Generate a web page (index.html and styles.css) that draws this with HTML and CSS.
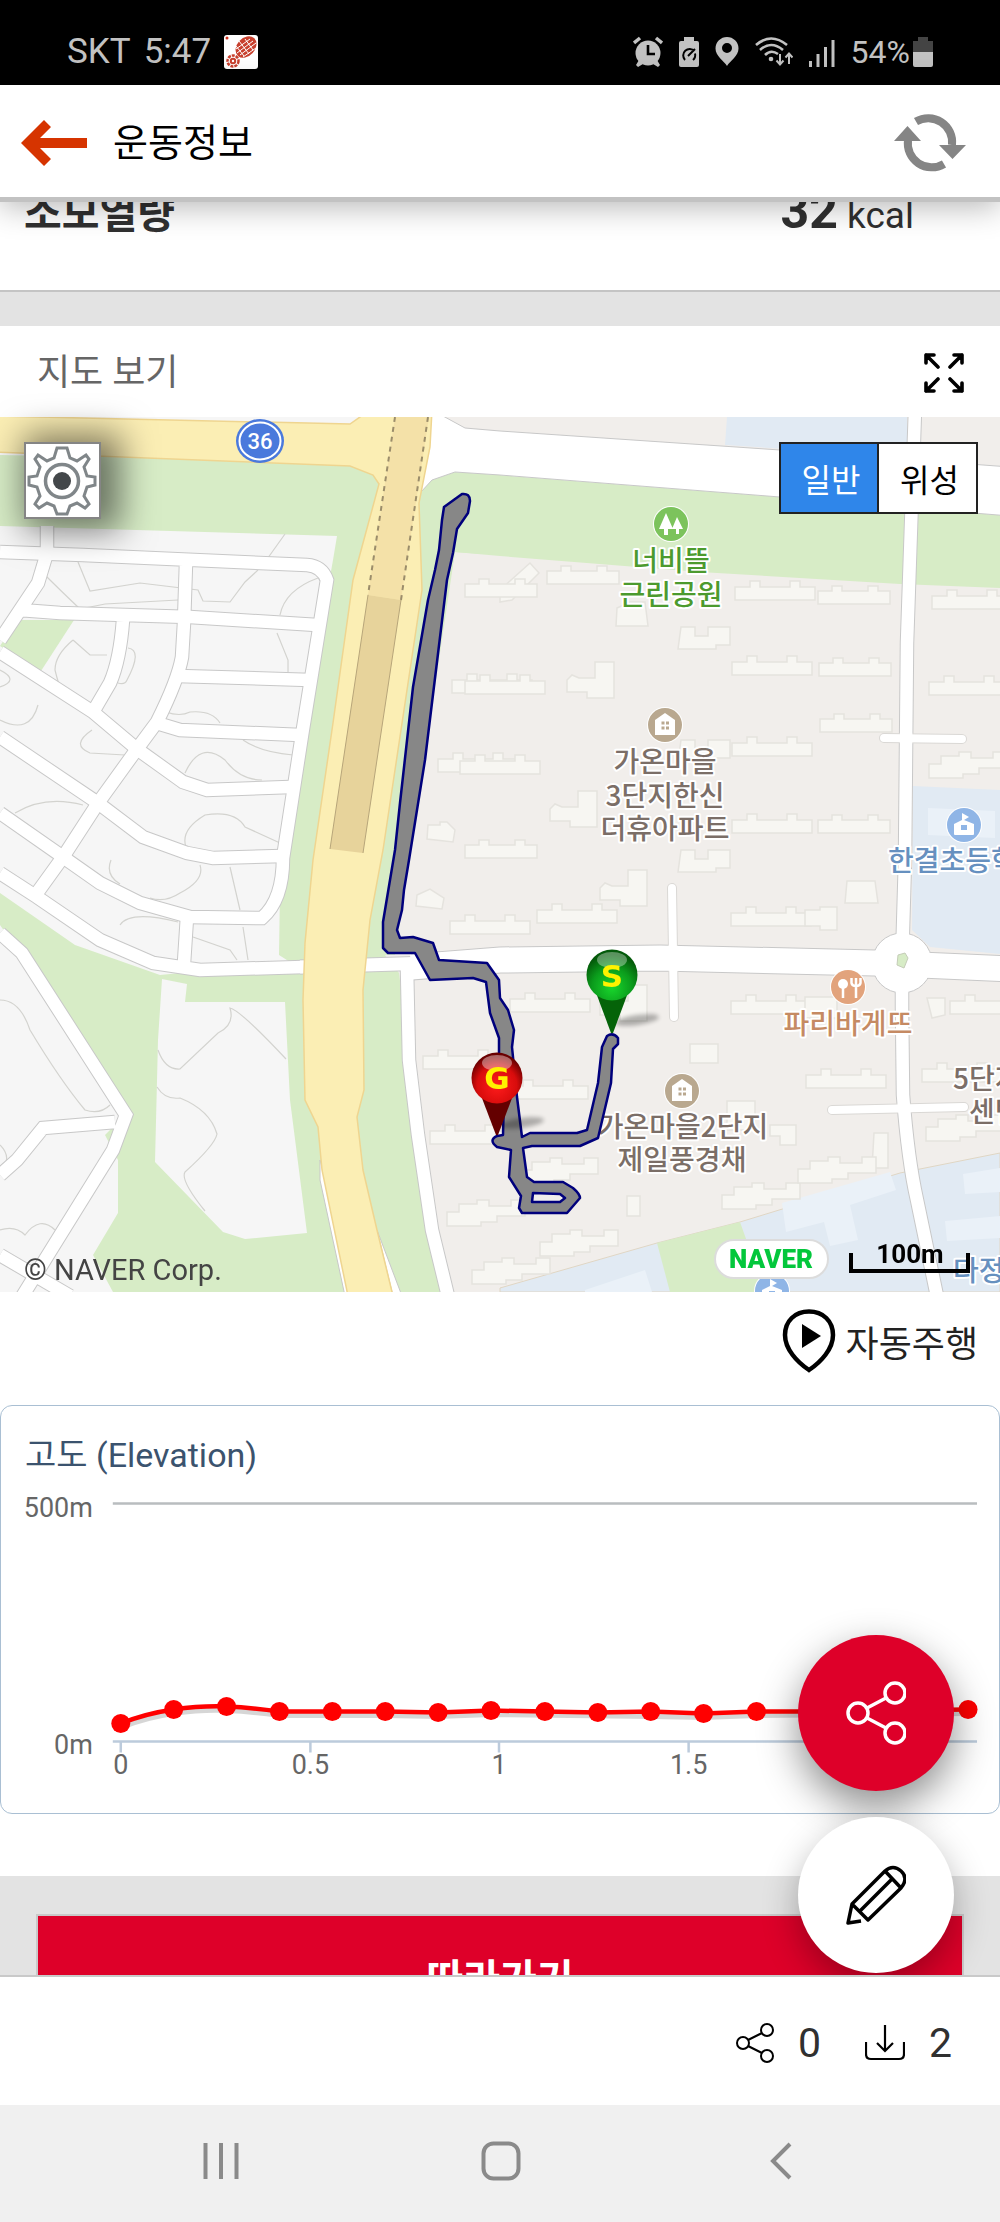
FILE: index.html
```html
<!DOCTYPE html>
<html lang="ko">
<head>
<meta charset="utf-8">
<meta name="viewport" content="width=device-width, initial-scale=1">
<title>운동정보</title>
<link rel="stylesheet" href="styles.css">
</head>
<body>
<div class="app">
  <div class="status">
    <div class="status-left">
      <span>SKT</span><span>5:47</span>
      <svg class="app-badge" width="34" height="34" viewBox="0 0 34 34">
        <rect width="34" height="34" rx="3" fill="#fff"/>
        <circle cx="3" cy="3" r="1.5" fill="#d0301c"/>
        <ellipse cx="22" cy="12" rx="9" ry="12" transform="rotate(42 22 12)" fill="#c8402e"/>
        <path d="M12 14l14-10M13 18l16-12M16 20l16-12M19 22l13-9M15 6l10 13M21 4l8 11M12 11l8 10" stroke="#fff" stroke-width="1"/>
        <circle cx="9" cy="26" r="5.5" fill="none" stroke="#c8402e" stroke-width="2.5" stroke-dasharray="3 1"/>
        <circle cx="9" cy="26" r="2.2" fill="none" stroke="#c8402e" stroke-width="2"/>
      </svg>
    </div>
    <div class="status-right">
      <svg width="30" height="32" viewBox="0 0 30 32"><g fill="#c2c2c2"><circle cx="15" cy="17" r="12.5"/><path d="M6 24l4 4-5 3-2-2zM24 24l-4 4 5 3 2-2z"/></g><path d="M1 7l6-5M29 7l-6-5" stroke="#c2c2c2" stroke-width="3.5"/><path d="M15 9v9h7" fill="none" stroke="#000" stroke-width="2.6"/></svg>
      <svg width="20" height="32" viewBox="0 0 20 32"><path d="M5 1h10v4h3q2 0 2 2v22q0 2-2 2H2q-2 0-2-2V7q0-2 2-2h3z" fill="#c2c2c2"/><path d="M6 24a6.500 6.500 0 1 1 9.500-9M16 17.500a6.500 6.500 0 0 1-2 6.500M9 20l7-7" fill="none" stroke="#000" stroke-width="2"/></svg>
      <svg width="24" height="32" viewBox="0 0 24 32"><path fill-rule="evenodd" d="M12 1a11.500 11.500 0 0 1 11.500 11.500C23.500 20 15 25 12 30 9 25 .5 20 .5 12.500A11.500 11.500 0 0 1 12 1zm0 6a5 5 0 1 0 0 10 5 5 0 0 0 0-10z" fill="#c2c2c2"/></svg>
      <svg width="38" height="32" viewBox="0 0 38 32"><g fill="none" stroke="#c2c2c2" stroke-width="2.600"><path d="M1 9Q16-4 32 9M5 14Q16 4 28 14M10 19Q16 13 23 18"/><path d="M25 18v10M21.500 24.500l3.500 4 3.500-4M34 28V18M30.500 21.500l3.500-4 3.500 4" stroke-width="2"/></g><circle cx="16" cy="23" r="2.300" fill="#c2c2c2"/></svg>
      <svg width="26" height="32" viewBox="0 0 26 32"><path d="M1.500 25v6M9 18v13M16.500 11v20M24 4v27" stroke="#c2c2c2" stroke-width="3"/></svg>
      <span class="battery">54%<svg width="20" height="32" viewBox="0 0 20 32"><path d="M5 1h10v4h5v12H0V5h5z" fill="#444"/><path d="M0 16h20v13q0 2-2 2H2q-2 0-2-2z" fill="#c2c2c2"/></svg></span>
    </div>
  </div>

  <header class="bar">
    <button class="plain" aria-label="뒤로"><svg width="66" height="46" viewBox="0 0 66 46"><path d="M0 23L23 0l7 7-11 11h47v10H19l11 11-7 7z" fill="#d63400"/></svg></button>
    <h1>운동정보</h1>
    <button class="plain" aria-label="새로고침"><svg width="72" height="58" viewBox="0 0 72 58"><g fill="none" stroke="#858585" stroke-width="8"><path d="M22 7.500A24 24 0 0 1 58 31"/><path d="M50 50A24 24 0 0 1 14 26"/></g><path d="M45 31h27L58.500 45zM0 27h27L13.500 12z" fill="#858585"/></svg></button>
  </header>

  <main>
    <section class="metric">
      <span class="metric-name">소모열량</span>
      <span class="metric-value"><b>32</b> kcal</span>
    </section>

    <section class="map-head">
      <h2>지도 보기</h2>
      <button class="plain" aria-label="전체 화면"><svg width="40" height="40" viewBox="0 0 40 40" fill="none" stroke="#000" stroke-width="3.600" stroke-linecap="round" stroke-linejoin="round"><path d="M2 10V2h8M2 2l12 12M30 2h8v8M38 2L26 14M2 30v8h8M2 38l12-12M38 30v8h-8M38 38L26 26"/></svg></button>
    </section>

    <section class="map">
      <svg class="map-art" viewBox="0 417 1000 875" role="img" aria-label="운동 경로 지도">
        <defs>
          <path id="slab" d="M0 6H15V0H25V6H55V0H65V6H80V19H0Z"/>
          <path id="slab-s" d="M0 5H14V0H24V5H50V0H60V5H72V18H0Z"/>
          <path id="ell" d="M0 18L5 13 12 16H28V0H47V36H20V30H0Z"/>
          <path id="block" d="M3 0H17V9H30V0H52V18H38V22H0Z"/>
          <path id="steps" d="M0 12H12V4H30V0H42V6H64V0H78V16H50V22H34V26H0Z"/>
          <g id="house"><circle r="18" fill="#fff"/><circle r="17" fill="#b9a88f"/><path d="M-10 10V-5L0-12 10-5V10Z" fill="#fff"/><path d="M-3.500-2h3M1-2h3M-3.500 3h3M1 3h3" stroke="#b9a88f" stroke-width="3"/></g>
          <g id="school"><circle r="18" fill="#fff"/><circle r="17" fill="#8fb5e6"/><path d="M-9 10Q-10 10-10 9V-1L-2-5V-12L5-8 0-5 10-1V9Q10 10 9 10Z" fill="#fff"/><path d="M-3 0h6v5h-6z" fill="#8fb5e6"/></g>
          <g id="lanes">
            <path d="M0 552L83 555 307 565Q322 566 327 580L302 735 283 858Q283 900 262 918L190 917 140 903 100 883 63 857 98 803 137 749 157 722Q178 680 182 657L184 623 186 563"/>
            <path d="M0 652L93 712 137 749 183 782 207 790 290 787M0 737L98 803 143 837 187 853 213 858 282 856M0 813L63 857 37 893M0 873L37 897 100 940 153 963 200 970 303 967M187 917L184 963"/>
            <path d="M47 526V553L38 583 20 610 0 640M20 610L60 613 190 617 317 625M123 620Q120 660 110 683L93 712M178 676L310 680M160 724L180 730 300 735"/>
            <path d="M0 933L22 953 126 1115 113 1150 20 1300M115 1122L43 1128 17 1160 0 1175M0 1255L70 1296"/>
            <path d="M407 968L409 1060 418 1135 432 1230 448 1296"/>
            <path d="M915 410L907 643 905 860 902 962 902 1008 903 1095Q908 1160 917 1200L937 1296"/>
          </g>
        </defs>

        <rect y="417" width="1000" height="875" fill="#f6f6f6"/>
        <path d="M0 455L380 462 430 480 500 474 400 973 440 1292H113L93 1255 118 1213V1160L105 1135 130 1110 0 925V893L75 945 160 975 290 962 279 955 280 890 302 735 333 560 337 536 0 526Z" fill="#d7ecc6"/>
        <path d="M162 979L158 1040 155 1162 223 1232 245 1239 307 1233 290 1100 285 1002H185L187 984 162 979Z" fill="#f6f6f6"/>
        <path d="M17 620H74L41 671 0 646Z" fill="#d7ecc6"/>
        <g fill="none" stroke="#d3d3cf" stroke-width="1.200">
          <path d="M285 534L265 562M78 562L90 591 140 583 198 590 203 601 230 602 245 582 258 570M280 615Q285 590 318 578M277 633L288 660V672M166 712Q180 717 190 712 212 710 220 723M45 575Q60 590 80 609L105 604 178 600M73 640Q55 655 55 670 60 690 60 684M73 640L90 655H107M128 648Q143 650 127 680 125 685 118 683M0 670Q20 680 0 687M0 720Q30 735 38 705M92 730Q70 745 90 753L125 755M185 773Q200 740 225 760 240 780 262 780M243 740Q260 752 293 755M186 847Q180 830 205 815 235 810 245 827L280 843M15 813Q45 795 83 805M111 860Q105 875 120 884M200 865Q205 880 180 893 165 903 150 898M230 867L240 910M120 925Q130 910 178 922M243 927L248 960M193 937L230 950 237 960M0 1000Q20 1000 30 1030 60 1080 85 1110 100 1115 110 1105M0 1145Q10 1155 5 1165M0 1230Q15 1225 25 1235 40 1215 55 1230M158 1050Q165 1070 180 1069L218 1033Q235 1025 230 1008 240 1010 286 1059M157 1087Q165 1100 180 1098 210 1110 217 1134 215 1145 185 1172 180 1180 205 1211"/>
        </g>

        <path d="M455 552L700 570 1000 586V1292H440L399 973 385 955Z" fill="#f1eeeb"/>
        <path d="M440 417H1000V466L780 450 465 430Z" fill="#f1eeeb"/>
        <path d="M727 417H907V457L725 445Z" fill="#e1eaf3"/>
        <path d="M913 786L1000 790V954L930 947 912 930Z" fill="#e1eaf3"/>
        <path d="M500 1288L657 1243 740 1222 900 1173 1000 1153V1292H500Z" fill="#e1eaf3" stroke="#e0d6c4"/>
        <path d="M657 1243L740 1222 765 1292H670Z" fill="#d7ecc6"/>
        <g fill="#eaf1f8"><path d="M782 1203L890 1172 896 1190 850 1205 858 1240 830 1246 824 1222 786 1232ZM963 1174L1000 1168V1192L965 1194ZM945 1221L1000 1216V1238L947 1241ZM585 1290L645 1270 652 1292H585Z"/><path d="M928 808L995 811V838L928 835Z"/></g>

        <g fill="#f7f6f2" stroke="#e5e3de" stroke-width="1.500">
          <use href="#slab" x="735" y="581"/><use href="#slab-s" x="818" y="586"/><use href="#slab" x="732" y="656"/><use href="#slab-s" x="819" y="658"/><use href="#slab-s" x="820" y="714"/><use href="#slab" x="732" y="737"/><use href="#slab" x="732" y="814"/><use href="#slab-s" x="818" y="815"/>
          <use href="#slab" x="932" y="590"/><use href="#slab" x="929" y="676"/><use href="#steps" x="929" y="752"/><use href="#slab-s" x="547" y="566"/><path d="M500 590L530 563 539 573 512 600 500 602ZM617 608L630 602H645L648 626H616Z"/>
          <use href="#ell" x="567" y="662"/><use href="#ell" x="550" y="791"/><use href="#ell" x="600" y="870"/><use href="#block" x="678" y="627"/><use href="#block" x="678" y="740"/><use href="#block" x="678" y="850"/>
          <use href="#slab-s" x="465" y="579"/><use href="#slab" x="452" y="674"/><use href="#slab" x="465" y="675"/><use href="#slab" x="438" y="753"/><use href="#slab" x="460" y="755"/><path d="M428 825H440V822H447L455 830 453 842 427 839ZM417 895L430 889 444 898 442 909 416 906Z"/><use href="#slab-s" x="465" y="840"/><use href="#slab" x="450" y="915"/><use href="#slab" x="537" y="904"/>
          <use href="#slab" x="731" y="907"/><path d="M805 910H820V907H837V930H820V926H805ZM847 881H875L878 903H845Z"/>
          <use href="#slab" x="510" y="993"/><use href="#slab" x="423" y="1050"/><use href="#slab" x="430" y="1125"/><use href="#slab" x="508" y="1080"/><use href="#ell" x="600" y="985"/><use href="#slab" x="731" y="995"/><path d="M805 997H837V1018H805ZM690 1044H718V1063H690ZM874 1133H888V1168H872ZM627 1196H640V1216H627ZM727 1101H755V1130H727ZM770 1125H796V1145H780V1136H770Z"/>
          <use href="#slab" x="806" y="1069"/><use href="#steps" x="722" y="1183"/><use href="#steps" x="798" y="1157"/><use href="#steps" x="520" y="1158"/><use href="#steps" x="540" y="1230"/><use href="#steps" x="447" y="1200"/><use href="#steps" x="472" y="1258"/><use href="#slab" x="950" y="995"/><path d="M927 998H945V1015L932 1018Z"/><use href="#slab" x="922" y="1063"/><use href="#steps" x="926" y="1115"/>
        </g>

        <path d="M423 491L432 480 455 472 500 475 780 497 900 507 1000 515V588L900 584 700 572 500 556 455 552 395 955H370L383 850 422 590 419 503Z" fill="#d7ecc6"/>
        <path d="M432 410L465 428 500 431 780 450 1010 467V516L900 507 780 497 500 475 455 472 432 480 421 492Z" fill="#fff" stroke="#c8c8c8"/>
        <g fill="none" stroke="#c8c8c8" stroke-width="14.500"><use href="#lanes"/></g>
        <path d="M300 967L430 963" fill="none" stroke="#c8c8c8" stroke-width="15"/>
        <path d="M412 967L500 960 660 958 875 963 1010 969" fill="none" stroke="#c8c8c8" stroke-width="27"/>
        <circle cx="902" cy="963" r="30" fill="#fff" stroke="#c8c8c8"/>
        <g fill="none" stroke="#dad8d5" stroke-width="10" stroke-linecap="round"><path d="M672 888L674 1017M884 738L962 739M832 1110L964 1107"/></g>
        <g fill="none" stroke="#fff" stroke-width="8" stroke-linecap="round"><path d="M672 888L674 1017M884 738L962 739M832 1110L964 1107"/></g>
        <g fill="none" stroke="#fff" stroke-width="12.500"><use href="#lanes"/></g>
        <path d="M300 967L430 963" fill="none" stroke="#fff" stroke-width="13"/>
        <path d="M411 967L500 960 660 958 875 963 1010 969" fill="none" stroke="#fff" stroke-width="25"/>
        <path d="M898 955L905 953 908 958 904 968 897 965Z" fill="#d7ecc6" stroke="#c5cdb8"/>
        <path d="M320 1160V1180L345 1296H360ZM377 1230L393 1296H402Z" fill="#fff" stroke="#c8c8c8"/>

        <path d="M-5 416L350 424 370 410H432L430 447 419 503 422 590 383 850 370 920 363 990 364 1090 357 1117 363 1170 377 1230 393 1296H348L322 1170 318 1127 305 1100 303 1000 305 943 313 860 333 723 353 580 379 484 373 475 350 466-5 452Z" fill="#fbeeb4" stroke="#efd590" stroke-width="1.500"/>
        <path d="M395 417H429L401 600 368 595Z" fill="#f4e1a8"/>
        <path d="M395 417L368 595M428 417L401 600" stroke="#9b8d6b" stroke-width="2" stroke-dasharray="5 5"/>
        <path d="M368 595L401 600 363 853 330 849Z" fill="#e7d39b"/>
        <path d="M368 595L330 849M401 600L363 853" stroke="#b7a57a" fill="none"/>
        <ellipse cx="260" cy="441" rx="24" ry="22" fill="#4a79dc"/><ellipse cx="260" cy="441" rx="20.500" ry="18.500" fill="none" stroke="#fff" stroke-width="2"/>
        <text x="260" y="449" class="road-no">36</text>

        <g class="label">
          <g class="park"><circle cx="671" cy="524" r="18" fill="#fff"/><circle cx="671" cy="524" r="17" fill="#7cc35c"/><path d="M666 513L673 529H668V535H664V529H659ZM677 517L683 529H679V534H676V529H672Z" fill="#fff"/><text x="671" y="571">너비뜰</text><text x="671" y="605">근린공원</text></g>
          <use href="#house" x="665" y="725"/><text x="665" y="772">가온마을</text><text x="665" y="806">3단지한신</text><text x="665" y="839">더휴아파트</text>
          <use href="#house" x="682" y="1091"/><text x="683" y="1137">가온마을2단지</text><text x="682" y="1170">제일풍경채</text>
          <g class="cafe"><circle cx="848" cy="987" r="18" fill="#fff"/><circle cx="848" cy="987" r="17" fill="#e2a37c"/><circle cx="843" cy="984" r="5" fill="#fff"/><path d="M843 985V998M856 980V998M851.500 978V983Q852 986 856 986T860.500 983V978M856 978V986" stroke="#fff" stroke-width="2.500" fill="none"/><text x="848" y="1034">파리바게뜨</text></g>
          <g class="edu"><use href="#school" x="964" y="825"/><use href="#school" x="772" y="1291"/><text class="from" x="888" y="871">한결초등학교</text><text class="from" x="953" y="1281">다정</text></g>
          <text class="from" x="953" y="1089">5단지</text><text class="from" x="969" y="1122">센텀</text>
        </g>

        <path fill="#878787" stroke="#00007c" stroke-width="2.500" stroke-linejoin="round" fill-rule="evenodd" d="M462 494Q470 493 470 501L468 513 457 529 453 553 447 580 425 760 409 860 404 890 402 910 397 930 400 938 413 937 433 943 439 960 487 963 499 980 500 998 508 1010 514 1030 512 1047 517 1097 522 1137 530 1133H577L587 1130 598 1083 602 1047 607 1036Q613 1032 618 1038V1044L613 1049 611 1083 598 1138 580 1146H532L523 1148 527 1177 534 1182H563L573 1188Q580 1194 580 1198L567 1213H522L519 1208 521 1196 509 1177 511 1150 497 1147Q488 1140 497 1136L503 1135 504 1097 499 1057V1038L490 1013 486 982 473 978 430 980 415 953H388L383 948V922L395 850 400 803 413 687 428 600 435 570 439 550 442 520 444 507ZM533 1193L560 1194 565 1198 560 1202H532Z"/>

        <defs>
          <radialGradient id="red" cx=".5" cy=".65" r=".6"><stop offset="0" stop-color="#ff1c1c"/><stop offset=".65" stop-color="#d80c0c"/><stop offset="1" stop-color="#6a0000"/></radialGradient>
          <radialGradient id="green" cx=".5" cy=".75" r=".65"><stop offset="0" stop-color="#18d62c"/><stop offset=".6" stop-color="#0b9c1c"/><stop offset="1" stop-color="#045a0a"/></radialGradient>
          <filter id="soft"><feGaussianBlur stdDeviation="2"/></filter>
        </defs>
        <g filter="url(#soft)" fill="#000" opacity=".28"><ellipse cx="637" cy="1020" rx="22" ry="5" transform="rotate(-8 637 1020)"/><ellipse cx="522" cy="1123" rx="22" ry="5" transform="rotate(-8 522 1123)"/></g>
        <path d="M595 990L611 1033H613L629 990Z" fill="#056309"/><circle cx="612" cy="975" r="25.500" fill="url(#green)"/><ellipse cx="612" cy="960" rx="15" ry="8" fill="#fff" opacity=".35"/><text class="pin-letter" x="612" y="987">S</text>
        <path d="M480 1093L496 1135H498L514 1093Z" fill="#640000"/><circle cx="497" cy="1078" r="25.500" fill="url(#red)"/><ellipse cx="497" cy="1063" rx="15" ry="8" fill="#fff" opacity=".4"/><text class="pin-letter" x="497" y="1089">G</text>

        <rect x="715" y="1240" width="113" height="38" rx="19" fill="#fff" stroke="#dcdcdc" stroke-width="2"/>
        <text class="naver" x="771" y="1268">NAVER</text>
        <path d="M851 1253V1271H968V1253" fill="none" stroke="#000" stroke-width="4"/>
        <text class="scale" x="910" y="1263">100m</text>
        <text class="copyright" x="24" y="1280">© NAVER Corp.</text>
      </svg>
      <button class="gear" aria-label="지도 설정"><svg width="72" height="72" viewBox="-36 -36 72 72"><path d="M-5-33H5L8-23 15-20 24-26 27-22 22-14 25-5 33-4V4L25 6 22 15 27 23 23 27 15 22 8 25 5 33H-5L-8 25-15 22-23 27-27 23-22 15-25 6-33 4V-4L-25-5-22-14-27-22-24-26-15-20-8-23Z" fill="#fff" stroke="#808689" stroke-width="3"/><circle r="16.500" fill="none" stroke="#808689" stroke-width="3.500"/><circle r="9" fill="#43474a"/></svg></button>
      <div class="segment"><button class="on">일반</button><button>위성</button></div>
    </section>

    <section class="drive">
      <button class="plain drive-btn"><svg width="54" height="64" viewBox="0 0 54 64"><path d="M27 2.500C41 2.500 51 12 51 26 51 40 39 53 27 61 15 53 3 40 3 26 3 12 13 2.500 27 2.500Z" fill="none" stroke="#000" stroke-width="4.500"/><path d="M20 15L39 27 20 39Z"/></svg>자동주행</button>
    </section>

    <section class="card">
      <h2>고도 (Elevation)</h2>
      <svg class="chart" viewBox="0 1484 1000 330" role="img" aria-label="고도 그래프">
        <path d="M112 1503.500H978" stroke="#b9bdbf" stroke-width="2.500"/>
        <path d="M112 1742H978M120 1742V1753M310 1742V1753M499 1742V1753M689 1742V1753M878 1742V1753" stroke="#bccbdc" stroke-width="2.500" fill="none"/>
        <path d="M120 1727Q145 1717 173 1713T226 1710 279 1715H385L438 1716 491 1714 651 1716 704 1717 757 1715 969 1713" fill="none" stroke="#000" stroke-opacity=".16" stroke-width="7"/>
        <path d="M120 1724Q145 1714 173 1710T226 1707 279 1712H385L438 1713 491 1711 544 1712 598 1713 651 1712 704 1714 757 1712H810L969 1710" fill="none" stroke="#f00" stroke-width="4.500"/>
        <g fill="#f00"><circle cx="120" cy="1724" r="9.500"/><circle cx="173" cy="1710" r="9.500"/><circle cx="226" cy="1707" r="9.500"/><circle cx="279" cy="1712" r="9.500"/><circle cx="332" cy="1712" r="9.500"/><circle cx="385" cy="1712" r="9.500"/><circle cx="438" cy="1713" r="9.500"/><circle cx="491" cy="1711" r="9.500"/><circle cx="545" cy="1712" r="9.500"/><circle cx="598" cy="1713" r="9.500"/><circle cx="651" cy="1712" r="9.500"/><circle cx="704" cy="1714" r="9.500"/><circle cx="757" cy="1712" r="9.500"/><circle cx="810" cy="1712" r="9.500"/><circle cx="863" cy="1711" r="9.500"/><circle cx="916" cy="1711" r="9.500"/><circle cx="969" cy="1710" r="9.500"/></g>
        <g class="axis"><text class="end" x="92" y="1517">500m</text><text class="end" x="92" y="1755">0m</text><text x="120" y="1775">0</text><text x="310" y="1775">0.5</text><text x="499" y="1775">1</text><text x="689" y="1775">1.5</text></g>
      </svg>
    </section>

    <section class="follow"><button>따라가기</button></section>

    <div class="fabs">
      <button class="fab edit" aria-label="수정"><svg width="60" height="60" viewBox="0 0 60 60" fill="none" stroke="#000" stroke-width="3.500" stroke-linejoin="round"><path d="M6 39L39 6Q47-1 55 6T55 23L22 55 6 39 2 58 15 56M39 6L55 23M46 14L14 46"/></svg></button>
      <button class="fab share" aria-label="공유"><svg width="60" height="64" viewBox="0 0 60 64" fill="none" stroke="#fff" stroke-width="3.500"><circle cx="12" cy="32" r="10"/><circle cx="49" cy="12" r="10"/><circle cx="49" cy="52" r="10"/><path d="M21 27L40 17M21 37L40 47"/></svg></button>
    </div>
  </main>

  <footer class="counts">
    <button class="plain"><svg width="38" height="40" viewBox="0 0 38 40" fill="none" stroke="#000" stroke-width="2"><circle cx="7" cy="20" r="6"/><circle cx="31" cy="7" r="6"/><circle cx="31" cy="33" r="6"/><path d="M12 17L26 10M12 23L26 30"/></svg>0</button>
    <button class="plain"><svg width="40" height="40" viewBox="0 0 40 40" fill="none" stroke="#000" stroke-width="2.200"><path d="M20 2V28M12 20L20 28 28 20M1 19V31Q1 36 6 36H34Q39 36 39 31V19"/></svg>2</button>
  </footer>

  <nav class="keys">
    <button class="plain" aria-label="최근 앱"><svg width="36" height="38" viewBox="0 0 36 38"><path d="M2.500 1V37M18 1V37M33.500 1V37" stroke="#8a8a8a" stroke-width="4"/></svg></button>
    <button class="plain" aria-label="홈"><svg width="40" height="40" viewBox="0 0 40 40"><rect x="2.500" y="2.500" width="35" height="35" rx="10" fill="none" stroke="#8a8a8a" stroke-width="4"/></svg></button>
    <button class="plain" aria-label="이전"><svg width="22" height="38" viewBox="0 0 22 38"><path d="M20 2L3 19 20 36" fill="none" stroke="#8a8a8a" stroke-width="4"/></svg></button>
  </nav>
</div>
</body>
</html>
```
FILE: styles.css
```css
* { box-sizing: border-box; }
body { margin: 0; background: #fff; color: #222; font-family: Roboto, "Noto Sans CJK KR", sans-serif; }
svg { display: block; flex: none; }
h1, h2 { margin: 0; font-weight: 400; }
button { font: inherit; color: inherit; cursor: pointer; }
.plain { display: flex; align-items: center; padding: 0; border: 0; background: none; }

.app { display: flex; flex-direction: column; height: 100vh; }

.status { display: flex; justify-content: space-between; align-items: center; flex: none; height: 85px; padding: 18px 67px 0; background: #000; color: #c2c2c2; font-size: 35px; line-height: 40px; }
.status-left { display: flex; align-items: center; gap: 13px; }
.status-right { display: flex; align-items: center; gap: 16px; }
.battery { display: flex; align-items: center; gap: 3px; font-size: 32px; }

.bar { position: relative; z-index: 2; display: flex; align-items: center; flex: none; height: 117px; padding: 4px 34px 0 21px; background: #fff; border-bottom: 5px solid #c2c2c2; box-shadow: 0 4px 30px rgba(0, 0, 0, .3); }
.bar h1 { flex: 1; padding-left: 26px; color: #000; font-size: 38px; line-height: 48px; }

main { position: relative; flex: 1; min-height: 0; overflow: hidden; }

.metric { display: flex; justify-content: space-between; align-items: flex-end; height: 90px; padding: 0 86px 50px 24px; overflow: hidden; border-bottom: 2px solid #c4c4c4; color: #303030; }
.metric-name { font-size: 41px; font-weight: 700; line-height: 52px; }
.metric-value { font-size: 37px; line-height: 48px; }
.metric-value b { font-size: 50px; }

.map-head { display: flex; justify-content: space-between; align-items: center; height: 125px; padding: 2px 36px 0 37px; border-top: 34px solid #e3e3e3; }
.map-head h2 { color: #666; font-size: 36px; line-height: 48px; }

.map { position: relative; }
.map-art { width: 100%; height: auto; }
.label { font-family: "Noto Sans CJK KR", sans-serif; font-size: 28px; font-weight: 500; text-anchor: middle; fill: #7b6e67; }
.label text { paint-order: stroke; stroke: #fff; stroke-width: 4px; stroke-linejoin: round; }
.label .from { text-anchor: start; }
.label .park { fill: #4c9a2e; }
.label .cafe { fill: #c58a63; }
.label .edu { fill: #6690bf; }
.road-no { font-size: 22px; font-weight: 500; text-anchor: middle; fill: #fff; }
.pin-letter { font-family: "DejaVu Sans", sans-serif; font-size: 31px; font-weight: 700; text-anchor: middle; fill: #fff200; }
.naver { font-size: 26px; font-weight: 900; text-anchor: middle; fill: #03c73c; }
.scale { font-size: 26px; font-weight: 700; text-anchor: middle; fill: #000; }
.copyright { font-size: 29px; fill: #444; }

.gear { position: absolute; top: 25px; left: 24px; width: 77px; height: 77px; padding: 0; border: 2px solid #858585; background: #fff; box-shadow: 10px 2px 34px 10px rgba(0, 0, 0, .5); }
.segment { position: absolute; top: 25px; right: 22px; display: flex; border: 2px solid #222; }
.segment button { width: 97px; height: 68px; padding: 0 0 0 4px; border: 0; background: #fff; color: #000; font-size: 32px; }
.segment button.on { width: 98px; border-right: 2px solid #222; background: #2f86ea; color: #fff; }

.drive { display: flex; justify-content: flex-end; height: 113px; padding: 16px 22px 32px; }
.drive-btn { gap: 10px; font-size: 36px; }

.card { border: 1px solid #a9bfd3; border-radius: 12px; }
.card h2 { padding: 25px 24px 5px; color: #3b536e; font-size: 34px; line-height: 48px; }
.chart { width: 100%; height: auto; }
.axis { font-size: 27px; text-anchor: middle; fill: #666; }
.axis .end { text-anchor: end; }

.follow { margin-top: 62px; padding: 38px 36px; background: #e3e3e3; }
.follow button { width: 100%; height: 124px; border: 2px solid #c9c9c9; background: #de0029; color: #fff; font-size: 40px; font-weight: 700; }

.fabs { position: absolute; right: 46px; bottom: 2px; display: flex; flex-direction: column-reverse; gap: 26px; }
.fab { display: grid; place-items: center; width: 156px; height: 156px; padding: 0; border: 0; border-radius: 50%; background: #fff; box-shadow: 0 14px 36px rgba(0, 0, 0, .3); }
.fab.share { background: #de0029; box-shadow: 0 16px 40px rgba(0, 0, 0, .45); }

.counts { display: flex; justify-content: flex-end; align-items: center; gap: 44px; flex: none; height: 130px; padding: 4px 48px 0; border-top: 2px solid #c9c9c9; background: #fff; color: #303030; }
.counts button { gap: 24px; font-size: 41px; }

.keys { display: grid; grid-template-columns: repeat(3, 1fr); justify-items: center; align-items: center; flex: none; height: 117px; padding: 0 79px 6px 81px; background: #f0f0f0; }
```
